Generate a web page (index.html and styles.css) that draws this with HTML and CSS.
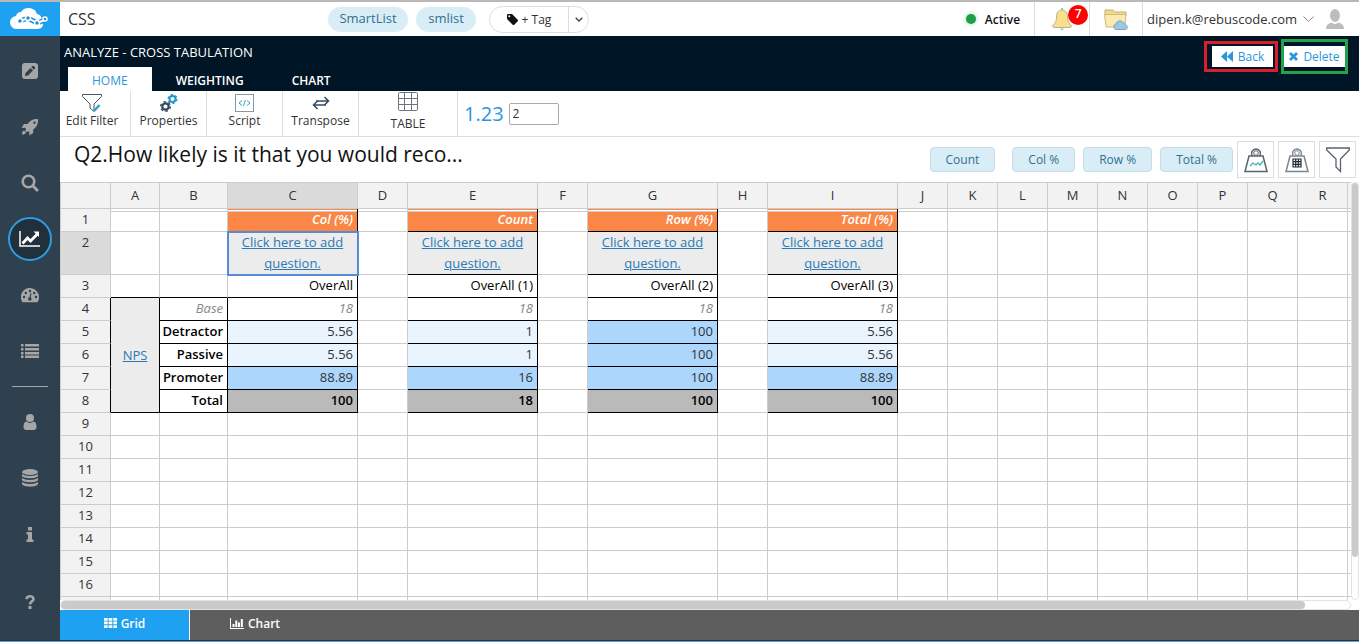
FILE: index.html
```html
<!DOCTYPE html>
<html lang="en">
<head>
    <meta charset="UTF-8">
    <meta name="viewport" content="width=device-width, initial-scale=1.0">
    <title>Analyze - Cross Tabulation</title>
    <link rel="stylesheet" href="styles.css">
</head>
<body>
    <div class="app">
        <!-- Sidebar -->
        <aside class="sidebar">
            <a href="#" class="logo" aria-label="Home">
                <svg width="40" height="24" viewBox="0 0 40 24">
                    <path fill="#fff" d="M7 22a6.500 6.500 0 0 1-1-13 5.500 5.500 0 0 1 5-4A9 9 0 0 1 27 7c3 .5 5 3 5 6l1 5c-1 3-3 4-6 4z"/>
                    <path fill="none" stroke="#1c8fdc" stroke-width="5" d="M10 14l8-3 9 5 8-3"/>
                    <path fill="none" stroke="#fff" stroke-width="2" d="M10 14l8-3 9 5 8-3"/>
                    <g fill="#1c8fdc" stroke="#fff" stroke-width="1.500">
                        <circle cx="10" cy="14" r="2.500"/><circle cx="18" cy="11" r="2.500"/>
                        <circle cx="27" cy="16" r="2.500"/><circle cx="35" cy="12" r="2"/>
                    </g>
                </svg>
            </a>
            <nav class="menu">
                <a href="#" aria-label="Edit">
                    <svg width="16" height="16" viewBox="0 0 16 16"><path fill-rule="evenodd" d="M3 0h10a3 3 0 0 1 3 3v10a3 3 0 0 1-3 3H3a3 3 0 0 1-3-3V3a3 3 0 0 1 3-3zM3 13l3-.5 5-5L8.500 5l-5 5zM9.300 4.200l2.500 2.500L13 5.500a1 1 0 0 0 0-1.200L11.700 3a1 1 0 0 0-1.200 0z"/></svg>
                </a>
                <a href="#" aria-label="Launch">
                    <svg width="18" height="18" viewBox="0 0 18 18"><path fill-rule="evenodd" d="M17 1c-5-.3-8 1.500-10.500 5H3L.5 10l3.500-.3 1 1L4.300 13l1 1 2.200-.8 1 1L8.200 17.500l4-2.500v-3.500C15.700 9 17.300 6 17 1zM13.500 3.500a1.200 1.200 0 1 1 0 2.400 1.200 1.200 0 0 1 0-2.400zM3 12.500c-1.500.5-2 2-2 4 2 0 3.500-.5 4-2z"/></svg>
                </a>
                <a href="#" aria-label="Search">
                    <svg width="18" height="18" viewBox="0 0 18 18"><g fill="none" stroke="#a6a6a6"><circle cx="7.500" cy="7.500" r="5.800" stroke-width="2.600"/><path stroke-width="3" stroke-linecap="round" d="M12 12l4 4"/></g></svg>
                </a>
                <a href="#" class="active" aria-label="Analyze">
                    <svg width="22" height="18" viewBox="0 0 22 18"><path fill="none" stroke="#fff" stroke-width="1.500" d="M1 1v15h20"/><path fill="none" stroke="#fff" stroke-width="2.800" d="M3.500 13.500l5-5.500 3 3L18 4.500"/><path fill="#fff" d="M14.500 1.500H20V7z"/></svg>
                </a>
                <a href="#" aria-label="Dashboard">
                    <svg width="18" height="15" viewBox="0 0 18 15"><path d="M9 0a9 9 0 0 1 9 9c0 2-.5 3.500-1.500 5.200h-15A9 9 0 0 1 9 0z"/><g fill="#2f404e"><circle cx="3" cy="9" r="1.200"/><circle cx="4.800" cy="5" r="1.200"/><circle cx="9" cy="3" r="1.200"/><circle cx="13.200" cy="5" r="1.200"/><circle cx="15" cy="9" r="1.200"/><circle cx="8.800" cy="11" r="1.800"/><path d="M9.500 5l1 .2-1 6-1.200-.3z"/></g></svg>
                </a>
                <a href="#" aria-label="Lists">
                    <svg width="18" height="14" viewBox="0 0 18 14"><path d="M0 0h2.500v2.500H0zM4 0h14v2.500H4zM0 4h2.500v2.500H0zM4 4h14v2.500H4zM0 8h2.500v2.500H0zM4 8h14v2.500H4zM0 11.500h2.500V14H0zM4 11.500h14V14H4z"/></svg>
                </a>
                <hr>
                <a href="#" aria-label="Users">
                    <svg width="14" height="16" viewBox="0 0 14 16"><circle cx="7" cy="4" r="4"/><path d="M3.500 7.500a5 5 0 0 0 7 0c2.200.4 3 2.500 3 5.500 0 1.500-1 3-2.500 3H3c-1.500 0-2.500-1.500-2.500-3 0-3 .8-5.100 3-5.500z"/></svg>
                </a>
                <a href="#" aria-label="Data">
                    <svg width="16" height="18" viewBox="0 0 16 18"><ellipse cx="8" cy="3" rx="8" ry="3"/><path d="M0 5c3 2.500 13 2.500 16 0v2c-1 3-15 3-16 0zM0 9c3 2.500 13 2.500 16 0v2c-1 3-15 3-16 0zM0 13c3 2.500 13 2.500 16 0v2c-1 3.500-15 3.500-16 0z"/></svg>
                </a>
                <a href="#" aria-label="Info">
                    <svg width="8" height="15" viewBox="0 0 8 15"><path d="M2 0h4v3.500H2zM.5 5H6v7.500h1.500V15h-7v-2.500H2v-5H.5z"/></svg>
                </a>
                <a href="#" class="help" aria-label="Help">
                    <svg width="10" height="14" viewBox="0 0 10 14"><path fill="none" stroke="#a6a6a6" stroke-width="2.600" d="M1.200 4C2 2 3.500 1.300 5 1.300c2 0 3.500 1 3.500 2.700C8.500 6.500 5 6.300 5 9.500"/><path d="M3.500 11h3v3h-3z"/></svg>
                </a>
            </nav>
        </aside>

        <div class="main">
            <!-- Top bar -->
            <header class="topbar">
                <div class="project">CSS</div>
                <div class="tags">
                    <span class="pill">SmartList</span>
                    <span class="pill pill-small">smlist</span>
                    <div class="tag-group">
                        <button type="button" class="tag-add">
                            <svg width="11" height="11" viewBox="0 0 11 11"><path fill-rule="evenodd" fill="#111" d="M0 1a1 1 0 0 1 1-1h4l6 6a1 1 0 0 1 0 1L7 11a1 1 0 0 1-1 0L0 5zM2.300 1.300a1 1 0 1 0 0 2 1 1 0 0 0 0-2z"/></svg>
                            + Tag
                        </button>
                        <button type="button" class="tag-more" aria-label="More tags">
                            <svg width="8" height="5" viewBox="0 0 8 5"><path fill="none" stroke="#444" stroke-width="1.300" d="M.7.700L4 4 7.300.7"/></svg>
                        </button>
                    </div>
                </div>
                <div class="status"><span class="dot"></span>Active</div>
                <button type="button" class="top-icon" aria-label="Notifications">
                    <svg width="20" height="23" viewBox="0 0 20 23"><path fill="#fbdf88" stroke="#b5b09a" d="M10 2c4 0 5.500 3 5.500 7 0 5 1.500 6 4 9 0 1.500-1 1.500-2 1.500h-15c-1 0-2 0-2-1.500 2.500-3 4-4 4-9 0-4 1.500-7 5.500-7z"/><path fill="#8fc6e8" d="M8 20.500h4L10 23zM9 0h2v2H9z"/></svg>
                    <span class="badge">7</span>
                </button>
                <button type="button" class="top-icon folder" aria-label="Files">
                    <svg width="24" height="21" viewBox="0 0 24 21"><path fill="#f3da88" stroke="#c4b070" d="M1 1h8l2 2h11v4H1z"/><path fill="#fbeab0" stroke="#cdbb80" d="M.5 5.500h21.500L21 18H2z"/><path fill="#9cc8e4" stroke="#7ba5c2" d="M12 20.500a2.800 2.800 0 0 1 0-5.500 4 4 0 0 1 7.500-1c1.500 0 2 1 2 2 2.500.5 2.500 4 0 4.500z"/></svg>
                </button>
                <a href="#" class="account">
                    dipen.k@rebuscode.com
                    <svg width="11" height="7" viewBox="0 0 11 7"><path fill="none" stroke="#888" d="M.5.500l5 5 5-5"/></svg>
                    <svg class="avatar" width="18" height="20" viewBox="0 0 18 20"><ellipse cx="9" cy="6.500" rx="5" ry="6.500" fill="#bdbdbd"/><path fill="#bdbdbd" d="M0 20c0-4 2-5 5.500-6.500a5 5 0 0 0 7 0C16 15 18 16 18 20z"/></svg>
                </a>
            </header>

            <!-- Page heading and tabs -->
            <div class="page-head">
                <div>
                    <h1>ANALYZE - CROSS TABULATION</h1>
                    <div class="tabs">
                        <a href="#" class="tab current">HOME</a>
                        <a href="#" class="tab">WEIGHTING</a>
                        <a href="#" class="tab">CHART</a>
                    </div>
                </div>
                <div class="actions">
                    <div class="mark mark-red">
                        <button type="button"><svg width="12" height="11" viewBox="0 0 12 11"><path d="M6 0v11L0 5.500zM12 0v11L6 5.500z"/></svg>Back</button>
                    </div>
                    <div class="mark mark-green">
                        <button type="button"><svg width="9" height="9" viewBox="0 0 9 9"><path fill="none" stroke="#2a96dc" stroke-width="2.800" d="M1 1l7 7M8 1L1 8"/></svg>Delete</button>
                    </div>
                </div>
            </div>

            <!-- Ribbon -->
            <div class="ribbon">
                <button type="button" class="tool first">
                    <svg width="20" height="18" viewBox="0 0 20 18"><path fill="none" stroke="#4a5660" d="M.5.500h19v2L12 10v7.500L8 14v-4L.500 2.500z"/><path stroke="#2fa0cf" stroke-width="2.500" d="M12 17l5.500-6"/></svg>
                    Edit Filter
                </button>
                <button type="button" class="tool">
                    <svg width="18" height="18" viewBox="0 0 18 18"><g fill="none"><circle cx="5.500" cy="12.500" r="3.200" stroke="#34495e" stroke-width="2.200"/><circle cx="5.500" cy="12.500" r="4.800" stroke="#34495e" stroke-width="1.400" stroke-dasharray="2.500 2.500"/><circle cx="12.500" cy="5" r="3" stroke="#1f9ac4" stroke-width="2"/><circle cx="12.500" cy="5" r="4.400" stroke="#1f9ac4" stroke-width="1.300" stroke-dasharray="2.300 2.300"/></g></svg>
                    Properties
                </button>
                <button type="button" class="tool">
                    <svg width="20" height="18" viewBox="0 0 20 18"><g fill="none"><rect x=".5" y=".5" width="18" height="17" stroke="#8b98a3"/><path stroke="#35a5b8" d="M7 6.500L4 9l3 2.500M12 6.500L15 9l-3 2.500M10.500 6l-2 6"/></g></svg>
                    Script
                </button>
                <button type="button" class="tool">
                    <svg width="18" height="18" viewBox="0 0 18 18"><path fill="none" stroke="#34495e" stroke-width="1.500" d="M4 7h12M12.500 3L16.500 7 12.500 11M14 11H2M5.500 7L1.500 11 5.500 15"/></svg>
                    Transpose
                </button>
                <button type="button" class="tool wide">
                    <svg width="20" height="19" viewBox="0 0 20 19"><path fill="none" stroke="#6a7580" d="M1.500.5h17a1 1 0 0 1 1 1v16a1 1 0 0 1-1 1h-17a1 1 0 0 1-1-1v-16a1 1 0 0 1 1-1zM6.500.5v18M13.500.5v18M.5 6.500h19M.5 12.500h19"/></svg>
                    TABLE
                </button>
                <label class="decimals">
                    1.23
                    <input type="text" value="2">
                </label>
            </div>

            <!-- Question title and display options -->
            <div class="question">
                <h2>Q2.How likely is it that you would reco...</h2>
                <div class="options">
                    <button type="button" class="option count">Count</button>
                    <button type="button" class="option">Col %</button>
                    <button type="button" class="option">Row %</button>
                    <button type="button" class="option">Total %</button>
                </div>
                <div class="icon-buttons">
                    <button type="button" aria-label="Weight chart">
                        <svg width="24" height="26" viewBox="0 0 24 26"><g fill="none"><path stroke="#59636c" stroke-width="1.500" d="M5 9h14l4 15.500H1zM8 8.500a4.500 4.500 0 1 1 8 0"/><circle cx="12" cy="6" r="2.300" stroke="#59636c"/><path stroke="#3fb0c5" stroke-width="1.300" d="M6 19l3-3 3 2 2-2 2 2 3-4"/></g></svg>
                    </button>
                    <button type="button" aria-label="Weight table">
                        <svg width="24" height="26" viewBox="0 0 24 26"><g fill="none"><path stroke="#7d868e" stroke-width="1.500" d="M5 9h14l4 15.500H1zM8 8.500a4.500 4.500 0 1 1 8 0"/><circle cx="12" cy="6" r="2.300" stroke="#7d868e"/><path stroke="#222d38" stroke-width="1.200" d="M8 12h8v8H8zM10.700 12v8M13.300 12v8M8 14.700h8M8 17.300h8"/></g></svg>
                    </button>
                    <button type="button" aria-label="Filter">
                        <svg width="24" height="26" viewBox="0 0 24 26"><path fill="none" stroke="#59636c" stroke-width="1.300" d="M.7 1h22.600v2L14.500 12v12.500L10 20v-8L.7 3z"/></svg>
                    </button>
                </div>
            </div>

            <!-- Spreadsheet -->
            <div class="sheet">
                <div class="sheet-view">
                    <table id="grid">
                        <colgroup>
                            <col class="c-row"><col class="c-a"><col class="c-b">
                            <col class="c-data"><col><col class="c-data"><col>
                            <col class="c-data"><col><col class="c-data">
                            <col span="10">
                        </colgroup>
                        <thead>
                            <tr>
                                <th></th><th>A</th><th>B</th><th class="sel">C</th><th>D</th><th>E</th><th>F</th><th>G</th><th>H</th><th>I</th>
                                <th>J</th><th>K</th><th>L</th><th>M</th><th>N</th><th>O</th><th>P</th><th>Q</th><th>R</th><th></th>
                            </tr>
                        </thead>
                        <tbody>
                            <tr class="frozen">
                                <th>1</th><td></td><td></td>
                                <td class="head">Col (%)</td><td></td>
                                <td class="head">Count</td><td></td>
                                <td class="head">Row (%)</td><td></td>
                                <td class="head">Total (%)</td>
                            </tr>
                            <tr class="tall">
                                <th class="sel">2</th><td></td><td></td>
                                <td class="add selected"><a href="#">Click here to add question.</a></td><td></td>
                                <td class="add"><a href="#">Click here to add question.</a></td><td></td>
                                <td class="add"><a href="#">Click here to add question.</a></td><td></td>
                                <td class="add"><a href="#">Click here to add question.</a></td>
                            </tr>
                            <tr>
                                <th>3</th><td class="edge"></td><td class="edge"></td>
                                <td class="box name">OverAll</td><td></td>
                                <td class="box name">OverAll (1)</td><td></td>
                                <td class="box name">OverAll (2)</td><td></td>
                                <td class="box name">OverAll (3)</td>
                            </tr>
                            <tr>
                                <th class="dark">4</th><td class="nps" rowspan="5"><a href="#">NPS</a></td><td class="box base">Base</td>
                                <td class="box base">18</td><td></td>
                                <td class="box base">18</td><td></td>
                                <td class="box base">18</td><td></td>
                                <td class="box base">18</td>
                            </tr>
                            <tr>
                                <th class="dark">5</th><td class="box label">Detractor</td>
                                <td class="box low">5.56</td><td></td>
                                <td class="box low">1</td><td></td>
                                <td class="box high">100</td><td></td>
                                <td class="box low">5.56</td>
                            </tr>
                            <tr>
                                <th class="dark">6</th><td class="box label">Passive</td>
                                <td class="box low">5.56</td><td></td>
                                <td class="box low">1</td><td></td>
                                <td class="box high">100</td><td></td>
                                <td class="box low">5.56</td>
                            </tr>
                            <tr>
                                <th class="dark">7</th><td class="box label">Promoter</td>
                                <td class="box high">88.89</td><td></td>
                                <td class="box high">16</td><td></td>
                                <td class="box high">100</td><td></td>
                                <td class="box high">88.89</td>
                            </tr>
                            <tr>
                                <th class="dark">8</th><td class="box label">Total</td>
                                <td class="box total">100</td><td></td>
                                <td class="box total">18</td><td></td>
                                <td class="box total">100</td><td></td>
                                <td class="box total">100</td>
                            </tr>
                        </tbody>
                    </table>
                </div>
                <div class="scroll-y"><div class="thumb"></div></div>
                <div class="scroll-x"><div class="thumb"></div></div>
            </div>

            <footer class="views">
                <a href="#" class="view current"><svg width="13" height="10" viewBox="0 0 13 10"><path fill="#fff" d="M0 0h3.700v2.700H0zM4.600 0h3.700v2.700H4.600zM9.300 0H13v2.700H9.300zM0 3.600h3.700v2.700H0zM4.600 3.600h3.700v2.700H4.600zM9.300 3.600H13v2.700H9.300zM0 7.300h3.700V10H0zM4.600 7.300h3.700V10H4.600zM9.300 7.300H13V10H9.300z"/></svg>Grid</a>
                <a href="#" class="view"><svg width="14" height="11" viewBox="0 0 14 11"><path fill="#fff" d="M0 0h1v10h13v1H0zM2.500 6h2v3h-2zM5.300 2.500h2V9h-2zM8 4.500h2V9H8zM10.800 1h2v8h-2z"/></svg>Chart</a>
            </footer>
        </div>
    </div>
    <div class="taskbar"></div>

<script>
    const body = document.querySelector('#grid tbody');
    const lastRow = 16;

    // Empty cells to the right of the results
    body.querySelectorAll('tr').forEach(function(row) {
        for (let i = 0; i < 10; i++) {
            row.insertCell();
        }
    });

    // Empty rows below the results, plus one spare row at the end
    for (let n = 9; n <= lastRow + 1; n++) {
        const row = body.insertRow();
        const head = document.createElement('th');
        head.textContent = n <= lastRow ? n : '';
        row.appendChild(head);
        for (let i = 0; i < 19; i++) {
            row.insertCell();
        }
    }
</script>

</body>
</html>
```
FILE: styles.css
```css
/* Basic Reset */
* {
    margin: 0;
    padding: 0;
    box-sizing: border-box;
}

body {
    font-family: "Open Sans", "Noto Sans", sans-serif;
    font-size: 13px;
    color: #333;
    background-color: #fff;
    display: flex;
    flex-direction: column;
    height: 100vh;
    overflow: hidden;
    border-top: 2px solid #b8b8b8;
}

button, input {
    font: inherit;
    color: inherit;
    background: none;
    border: none;
}

button {
    cursor: pointer;
}

a {
    color: inherit;
    text-decoration: none;
}

.app {
    flex: 1;
    min-height: 0;
    display: flex;
}

.taskbar {
    height: 2px;
    background-color: #6f9cba;
    border-top: 1px solid #1d3550;
}

/* Sidebar */
.sidebar {
    width: 60px;
    background-color: #2f404e;
}

.logo {
    height: 34px;
    background-color: #1fa1f2;
    display: flex;
    justify-content: center;
    align-items: center;
}

.menu {
    padding-top: 7px;
}

.menu a {
    height: 56px;
    display: flex;
    justify-content: center;
    align-items: center;
    fill: #a6a6a6;
}

.menu .active {
    width: 44px;
    height: 44px;
    margin: 6px auto;
    border: 2px solid #2b9fe6;
    border-radius: 50%;
    background-color: #22303b;
}

.menu hr {
    width: 36px;
    margin: 7px auto;
    border: none;
    border-top: 1px solid #a6a6a6;
}

.menu .help {
    margin-top: 12px;
}

.main {
    flex: 1;
    min-width: 0;
    display: flex;
    flex-direction: column;
}

/* Top bar */
.topbar {
    height: 34px;
    display: flex;
    align-items: stretch;
}

.project {
    width: 268px;
    padding-left: 8px;
    font-size: 16px;
    line-height: 34px;
}

.tags {
    flex: 1;
    display: flex;
    align-items: center;
    gap: 8px;
}

.pill {
    width: 80px;
    height: 25px;
    border-radius: 13px;
    background-color: #d9edf7;
    color: #31708f;
    text-align: center;
    line-height: 22px;
}

.pill-small {
    width: 60px;
}

.tag-group {
    display: flex;
    height: 27px;
    margin-left: 5px;
    border: 1px solid #ddd;
    border-radius: 14px;
}

.tag-add {
    width: 78px;
    display: flex;
    justify-content: center;
    align-items: center;
    gap: 4px;
    font-size: 12px;
}

.tag-more {
    width: 20px;
    border-left: 1px solid #ddd;
}

.tag-more svg {
    display: block;
    margin: auto;
}

.status {
    display: flex;
    align-items: center;
    gap: 9px;
    padding-right: 14px;
    font-size: 12px;
    font-weight: 600;
    color: #111;
}

.dot {
    width: 10px;
    height: 10px;
    border-radius: 50%;
    background-color: #1f9d47;
    box-shadow: 0 0 4px #8fe0a8;
}

.top-icon {
    position: relative;
    width: 55px;
    border-left: 1px solid #ddd;
    display: flex;
    justify-content: center;
    align-items: center;
}

.folder {
    width: 53px;
}

.badge {
    position: absolute;
    top: 3px;
    right: 1px;
    width: 20px;
    height: 20px;
    border-radius: 50%;
    background-color: #f00;
    color: #fff;
    font-size: 12px;
    font-weight: 600;
    line-height: 18px;
}

.account {
    display: flex;
    align-items: center;
    gap: 6px;
    padding: 0 15px 0 4px;
    border-left: 1px solid #ddd;
}

.avatar {
    margin-left: 6px;
}

/* Page heading and tabs */
.page-head {
    height: 55px;
    background-color: #001525;
    color: #fff;
    display: flex;
    justify-content: space-between;
    align-items: flex-start;
}

.page-head h1 {
    padding: 6px 4px 5px;
    font-size: 13px;
    font-weight: 500;
    line-height: 20px;
}

.tabs {
    display: flex;
    padding-left: 8px;
}

.tab {
    height: 24px;
    padding: 0 24px;
    font-size: 12px;
    font-weight: 600;
    line-height: 27px;
}

.tab.current {
    background-color: #fff;
    color: #2a96dc;
    font-weight: 400;
}

.actions {
    display: flex;
    align-items: center;
    gap: 3px;
    padding: 3px 11px 0 0;
}

.mark {
    display: flex;
    align-items: center;
    border: 3px solid;
}

.mark button {
    width: 61px;
    height: 21px;
    background-color: #fff;
    color: #2a96dc;
    fill: #2a96dc;
    font-size: 12px;
    display: flex;
    justify-content: center;
    align-items: center;
    gap: 5px;
}

.mark-red {
    height: 31px;
    padding: 0 2px 0 5px;
    border-color: #d8202c;
}

.mark-green {
    height: 35px;
    border-color: #23a24d;
}

/* Ribbon */
.ribbon {
    height: 46px;
    display: flex;
    border-bottom: 1px solid #ddd;
}

.tool {
    width: 76px;
    border-right: 1px solid #ddd;
    padding-top: 3px;
    font-size: 12px;
    line-height: 18px;
    display: flex;
    flex-direction: column;
    align-items: center;
    white-space: nowrap;
}

.tool.first {
    width: 71px;
    padding-right: 6px;
}

.tool.wide {
    width: 99px;
    padding-top: 1px;
    gap: 4px;
}

.decimals {
    display: flex;
    align-items: center;
    gap: 5px;
    padding-left: 6px;
    font-size: 20px;
    color: #2a96dc;
}

.decimals input {
    width: 50px;
    height: 22px;
    padding: 0 3px;
    border: 1px solid #aaa;
    border-radius: 2px;
    font-size: 12px;
    color: #333;
}

/* Question title and display options */
.question {
    height: 45px;
    display: flex;
    align-items: center;
    padding: 0 3px 0 14px;
}

.question h2 {
    flex: 1;
    padding-bottom: 12px;
    font-size: 21px;
    font-weight: 400;
    line-height: 28px;
    color: #111;
}

.options {
    display: flex;
    gap: 8px;
}

.option {
    height: 25px;
    padding: 0 15px;
    border: 1px solid #c5dbe5;
    border-radius: 4px;
    background-color: #d9edf7;
    color: #31708f;
    font-size: 12px;
}

.count {
    margin-right: 9px;
}

.icon-buttons {
    display: flex;
    gap: 4px;
    margin-left: 4px;
}

.icon-buttons button {
    width: 37px;
    height: 37px;
    border: 1px solid #ddd;
    display: flex;
    justify-content: center;
    align-items: center;
}

/* Spreadsheet */
.sheet {
    flex: 1;
    min-height: 0;
    display: grid;
    grid-template-columns: 1fr 8px;
    grid-template-rows: 1fr 10px;
}

.sheet-view {
    min-width: 0;
    min-height: 0;
    overflow: hidden;
}

table {
    width: 1338px;
    table-layout: fixed;
    border-collapse: separate;
    border-spacing: 0;
    border-top: 1px solid #ccc;
    border-left: 1px solid #ccc;
}

col {
    width: 50px;
}

.c-a {
    width: 49px;
}

.c-b {
    width: 68px;
}

.c-data {
    width: 130px;
}

th, td {
    height: 23px;
    border-right: 1px solid #ccc;
    border-bottom: 1px solid #ccc;
    line-height: 21px;
    white-space: nowrap;
}

th {
    background-color: #f2f2f2;
    font-weight: 400;
    text-align: center;
    vertical-align: top;
}

thead th {
    height: 26px;
    line-height: 25px;
}

th.sel {
    background-color: #dadada;
}

td {
    padding: 0 4px;
    text-align: right;
    vertical-align: top;
}

td a {
    color: #2a7ab5;
    text-decoration: underline;
}

/* Double line under the column letters */
.frozen td {
    background-image: linear-gradient(transparent 1px, #fff 1px, #fff 2px, #ccc 2px, #ccc 3px, transparent 3px);
}

.tall th, .tall td {
    height: 43px;
}

.head {
    border-color: #000;
    background-color: #fb8746;
    color: #fff;
    font-style: italic;
    font-weight: 600;
}

.add {
    border-color: #000;
    background-color: #ececec;
    text-align: center;
    white-space: normal;
}

.selected {
    outline: 2px solid #5b8ad4;
    outline-offset: -1px;
}

.edge {
    border-bottom-color: #000;
}

.dark {
    border-right-color: #000;
}

.box {
    border-color: #000;
}

.name {
    font-weight: 500;
    color: #000;
}

.base {
    font-style: italic;
    color: #888;
}

.label, .total {
    font-weight: 600;
    color: #000;
}

.label {
    padding-left: 0;
}

.low {
    background-color: #e9f4fe;
}

.high {
    background-color: #add6fc;
}

.total {
    background-color: #bababa;
}

.nps {
    border-color: #000;
    background-color: #ececec;
    text-align: center;
    vertical-align: middle;
}

/* Scrollbars */
.scroll-y, .scroll-x {
    border: 1px solid #e4e4e4;
    border-radius: 5px;
    background-color: #fff;
}

.scroll-y .thumb {
    width: 100%;
    height: 90%;
}

.scroll-x .thumb {
    width: 96.5%;
    height: 100%;
}

.thumb {
    border-radius: 4px;
    background-color: #cacaca;
}

/* Grid / Chart switch */
.views {
    height: 30px;
    display: flex;
    background-color: #5e5e5e;
    color: #fff;
}

.view {
    width: 130px;
    display: flex;
    justify-content: center;
    align-items: center;
    gap: 4px;
    padding-bottom: 4px;
    font-size: 12px;
    font-weight: 600;
}

.view.current {
    border-right: 1px solid #fff;
    background-color: #1fa1f2;
}
```
